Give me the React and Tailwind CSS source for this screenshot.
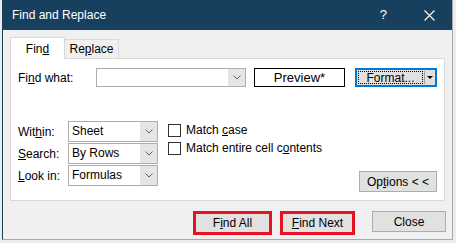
import React from "react";

const font = { fontFamily: '"Segoe UI", "Liberation Sans", Arial, sans-serif' };

function Chevron() {
  return (
    <svg width="8" height="5" viewBox="0 0 8 5" className="block">
      <polyline points="0.5,0.5 4,4 7.5,0.5" fill="none" stroke="#606060" strokeWidth="1" />
    </svg>
  );
}

function Select({ value }) {
  return (
    <div className="flex h-[21px] w-[90px] border border-[#adadad] bg-white">
      <div className="flex-1 pl-[3px] text-[12px] leading-[19px] text-black">{value}</div>
      <div className="flex w-[17px] items-center justify-center bg-[#e5e5e5]">
        <Chevron />
      </div>
    </div>
  );
}

function Checkbox({ children }) {
  return (
    <div className="flex h-[18px] items-center">
      <div className="h-[13px] w-[13px] border border-[#333333] bg-white" />
      <span className="ml-[5px] text-[12px] text-black">{children}</span>
    </div>
  );
}

export default function App() {
  return (
    <div className="h-[243px] w-[456px] overflow-hidden bg-[#ececec]" style={font}>
      <div className="ml-[2px] flex h-[240px] w-[451px] flex-col border-l border-b border-r border-l-[#17405f] border-b-[#a8a8a8] border-r-[#a8a8a8]">
        {/* title bar */}
        <div className="flex h-[30px] items-center bg-[#17405f] pl-[9px] text-white">
          <span className="text-[12px]">Find and Replace</span>
          <span className="ml-auto text-[13px]">?</span>
          <svg width="11" height="11" viewBox="0 0 11 11" className="ml-[37px] mr-[17px]">
            <path d="M0.5 0.5 L10.5 10.5 M10.5 0.5 L0.5 10.5" stroke="white" strokeWidth="1.1" />
          </svg>
        </div>

        {/* body */}
        <div className="flex-1 bg-[#f0f0f0] pl-[7px] pt-[7px]">
          {/* tabs */}
          <div className="flex h-[21px] items-end">
            <div className="relative z-10 -mb-px flex h-[22px] w-[55px] items-center justify-center border border-b-0 border-[#d9d9d9] bg-white text-[12px] text-black">
              <span>
                Fin<span className="underline">d</span>
              </span>
            </div>
            <div className="flex h-[19px] w-[54px] items-center justify-center border border-b-0 border-l-0 border-[#d9d9d9] bg-[#f0f0f0] text-[12px] text-black">
              <span>
                Re<span className="underline">p</span>lace
              </span>
            </div>
          </div>

          {/* panel */}
          <div className="flex h-[143px] w-[435px] flex-col border border-[#d9d9d9] bg-white pl-[7px] pr-[7px] pt-[9px]">
            <div className="flex h-[19px] items-center">
              <span className="w-[78px] text-[12px] text-black">
                Fi<span className="underline">n</span>d what:
              </span>
              <div className="flex h-[19px] w-[150px] border border-[#adadad] bg-white">
                <div className="flex-1" />
                <div className="flex w-[17px] items-center justify-center bg-[#e5e5e5]">
                  <Chevron />
                </div>
              </div>
              <div className="ml-[8px] flex h-[19px] w-[91px] items-center justify-center border border-black bg-white text-[13px] text-black">
                Preview*
              </div>
              <div className="ml-[10px] flex h-[19px] w-[82px] border-2 border-[#0078d7] bg-[#e1e1e1] p-px">
                <div className="flex flex-1 items-center justify-center border border-dotted border-black text-[12px] leading-none text-black">
                  Format...
                </div>
                <div className="ml-px flex w-[10px] items-center justify-center border-l border-[#a0a0a0]">
                  <svg width="6" height="3" viewBox="0 0 6 3">
                    <polygon points="0,0 6,0 3,3" fill="black" />
                  </svg>
                </div>
              </div>
            </div>

            <div className="mt-[34px] flex flex-1">
              <div className="flex flex-col gap-px">
                <div className="flex items-center">
                  <span className="w-[50px] text-[12px] text-black">
                    Wit<span className="underline">h</span>in:
                  </span>
                  <Select value="Sheet" />
                </div>
                <div className="flex items-center">
                  <span className="w-[50px] text-[12px] text-black">
                    <span className="underline">S</span>earch:
                  </span>
                  <Select value="By Rows" />
                </div>
                <div className="flex items-center">
                  <span className="w-[50px] text-[12px] text-black">
                    <span className="underline">L</span>ook in:
                  </span>
                  <Select value="Formulas" />
                </div>
              </div>

              <div className="ml-[10px] flex flex-col pt-[-1px]">
                <Checkbox>
                  Match <span className="underline">c</span>ase
                </Checkbox>
                <Checkbox>
                  Match entire cell c<span className="underline">o</span>ntents
                </Checkbox>
              </div>

              <div className="ml-auto self-end pb-[8px]">
                <div className="flex h-[21px] w-[78px] items-center justify-center border border-[#adadad] bg-[#e1e1e1] text-[12px] text-black">
                  <span>
                    Op<span className="underline">t</span>ions &lt; &lt;
                  </span>
                </div>
              </div>
            </div>
          </div>

          {/* footer buttons */}
          <div className="mt-[10px] flex items-start justify-end pr-[6px]">
            <div className="flex h-[24px] w-[79px] items-center justify-center border-[3px] border-[#e81123] bg-[#e1e1e1] text-[12px] text-black">
              <span>
                F<span className="underline">i</span>nd All
              </span>
            </div>
            <div className="ml-[8px] flex h-[24px] w-[75px] items-center justify-center border-[3px] border-[#e81123] bg-[#e1e1e1] text-[12px] text-black">
              <span>
                <span className="underline">F</span>ind Next
              </span>
            </div>
            <div className="ml-[17px] flex h-[21px] w-[74px] items-center justify-center border border-[#adadad] bg-[#e1e1e1] text-[12px] text-black">
              Close
            </div>
          </div>
        </div>
      </div>
    </div>
  );
}
